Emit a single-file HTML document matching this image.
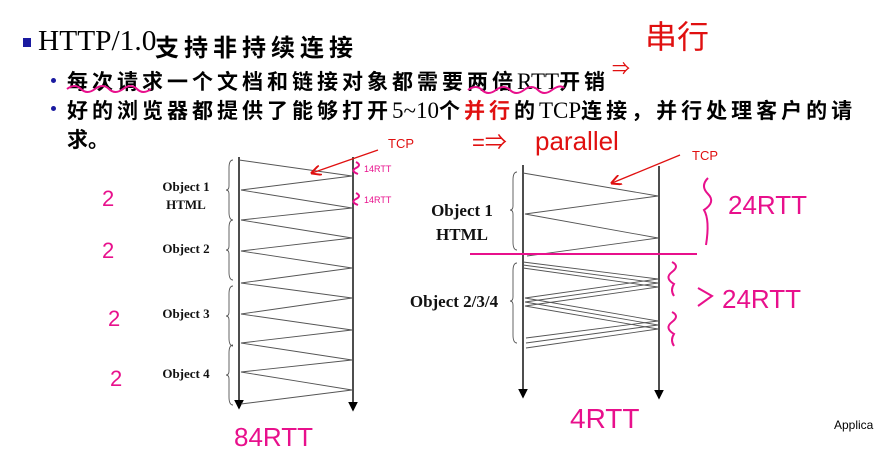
<!DOCTYPE html>
<html><head><meta charset="utf-8"><style>
body{margin:0;width:875px;height:458px;background:#fff;overflow:hidden;position:relative;font-family:"Liberation Serif","Noto Serif CJK SC",serif}
.t{position:absolute;white-space:nowrap}
.cn{font-family:"Liberation Serif","Noto Sans CJK SC",sans-serif;font-weight:bold}
</style></head><body>
<div class="t" style="left:23px;top:38px;width:8px;height:9px;background:#1a1aa0"></div>
<div class="t" style="left:38px;top:26px;font-size:28px;color:#000;transform:scaleX(1.05);transform-origin:left">HTTP/1.0</div>
<div class="t cn" style="left:155px;top:28px;font-size:24px;letter-spacing:5px">支持非持续连接</div>
<div class="t" style="left:51px;top:78px;width:5px;height:5px;border-radius:50%;background:#1a1aa0"></div>
<div class="t" style="left:67px;top:66px;font-size:21px;color:#000;letter-spacing:4px"><span class="cn">每次请求一个文档和链接对象都需要两倍</span><span style="font-size:23px;letter-spacing:0">RTT</span><span class="cn">开销</span></div>
<div class="t" style="left:51px;top:106px;width:5px;height:5px;border-radius:50%;background:#1a1aa0"></div>
<div class="t" style="left:67px;top:95px;font-size:21px;color:#000;letter-spacing:4px"><span class="cn">好的浏览器都提供了能够打开</span><span style="font-size:23px;letter-spacing:0">5~10</span><span class="cn">个</span><span class="cn" style="color:#e01010">并行</span><span class="cn">的</span><span style="font-size:23px;letter-spacing:0">TCP</span><span class="cn">连接，并行处理客户的请</span></div>
<div class="t cn" style="left:67px;top:124px;font-size:21px">求。</div>
<div class="t" style="left:834px;top:418px;font-size:12px;font-family:'Liberation Sans',sans-serif">Applica</div>
<svg width="875" height="458" style="position:absolute;left:0;top:0" font-family="Liberation Sans,Noto Sans CJK SC,sans-serif">
<defs><marker id="a" markerWidth="6" markerHeight="6" refX="5" refY="3" orient="auto"><path d="M0,0L6,3L0,6z" fill="#000"/></marker>
<marker id="r" markerWidth="8" markerHeight="8" refX="7" refY="4" orient="auto"><path d="M0,0L8,4L0,8" fill="none" stroke="#e01010" stroke-width="1.5"/></marker></defs>
<g stroke="#222" stroke-width="1.6"><line x1="239" y1="157" x2="239" y2="408" marker-end="url(#a)"/><line x1="353" y1="157" x2="353" y2="410" marker-end="url(#a)"/>
<line x1="523" y1="165" x2="523" y2="397" marker-end="url(#a)"/><line x1="659" y1="166" x2="659" y2="398" marker-end="url(#a)"/></g>
<g stroke="#555" stroke-width="0.9" fill="none">
<polyline points="239,160 352,176 241,190 352,208 241,220 352,238 241,251 352,268 241,283 352,298 241,314 352,330 241,343 352,360 241,372 352,390 241,404"/>
<polyline points="523,173 658,196 525,214 658,238 527,256"/>
<polyline points="523,262 658,279 525,298 658,321 526,338"/>
<polyline points="523,265 658,283 525,302 658,325 526,343"/>
<polyline points="523,268 658,287 525,306 658,329 526,348"/>
<path d="M233,160q-4,0-4,8v18q0,4-3,4q3,0,3,4v18q0,8,4,8"/>
<path d="M233,220q-4,0-4,8v18q0,4-3,4q3,0,3,4v18q0,8,4,8"/>
<path d="M233,286q-4,0-4,8v18q0,4-3,4q3,0,3,4v18q0,8,4,8"/>
<path d="M233,345q-4,0-4,8v18q0,4-3,4q3,0,3,4v18q0,8,4,8"/>
<path d="M517,172q-4,0-4,8v26q0,4-3,4q3,0,3,4v28q0,8,4,8"/>
<path d="M517,263q-4,0-4,8v26q0,4-3,4q3,0,3,4v30q0,8,4,8"/>
</g>
<g font-family="Liberation Serif,serif" font-weight="bold" font-size="13" text-anchor="middle" fill="#111">
<text x="186" y="191">Object 1</text><text x="186" y="209">HTML</text><text x="186" y="253">Object 2</text><text x="186" y="318">Object 3</text><text x="186" y="378">Object 4</text>
<g font-size="17"><text x="462" y="216">Object 1</text><text x="462" y="240">HTML</text><text x="454" y="307">Object 2/3/4</text></g></g>
<g stroke="#e01010" stroke-width="1.3"><line x1="378" y1="150" x2="312" y2="173" marker-end="url(#r)"/><line x1="680" y1="155" x2="612" y2="183" marker-end="url(#r)"/></g>
<g fill="#e01010" font-size="13"><text x="388" y="148">TCP</text><text x="692" y="160">TCP</text></g>
<g fill="#e01010"><text x="645" y="48" font-size="32">串行</text><text x="535" y="150" font-size="26">parallel</text><text x="472" y="150" font-size="22">=⇒</text><text x="612" y="75" font-size="18">⇒</text></g>
<line x1="470" y1="254" x2="697" y2="254" stroke="#e8108c" stroke-width="2"/>
<g stroke="#e8108c" stroke-width="2" fill="none"><path d="M67,89q8,-6 14,0t14,0t14,0t14,0t14,0t14,0"/><path d="M468,90q8,-6 14,0t14,0t14,0t14,0t14,0t14,0t12,-2"/>
<path d="M708,178q-8,8 0,16t-4,16q6,10 2,35"/><path d="M672,262q8,4 0,10t2,12q-4,6 0,12"/><path d="M672,312q8,4 0,10t2,12q-4,6 0,12"/><path d="M698,288l14,8l-14,10"/>
<path d="M356,162q6,3 0,6t2,6"/><path d="M356,193q6,3 0,6t2,6"/></g>
<g fill="#e8108c" font-size="22"><text x="102" y="206">2</text><text x="102" y="258">2</text><text x="108" y="326">2</text><text x="110" y="386">2</text>
<text x="728" y="214" font-size="26">24RTT</text><text x="722" y="308" font-size="26">24RTT</text><text x="570" y="428" font-size="28">4RTT</text><text x="234" y="446" font-size="26">84RTT</text>
<text x="364" y="172" font-size="9">14RTT</text><text x="364" y="203" font-size="9">14RTT</text></g>
</svg>
</body></html>
